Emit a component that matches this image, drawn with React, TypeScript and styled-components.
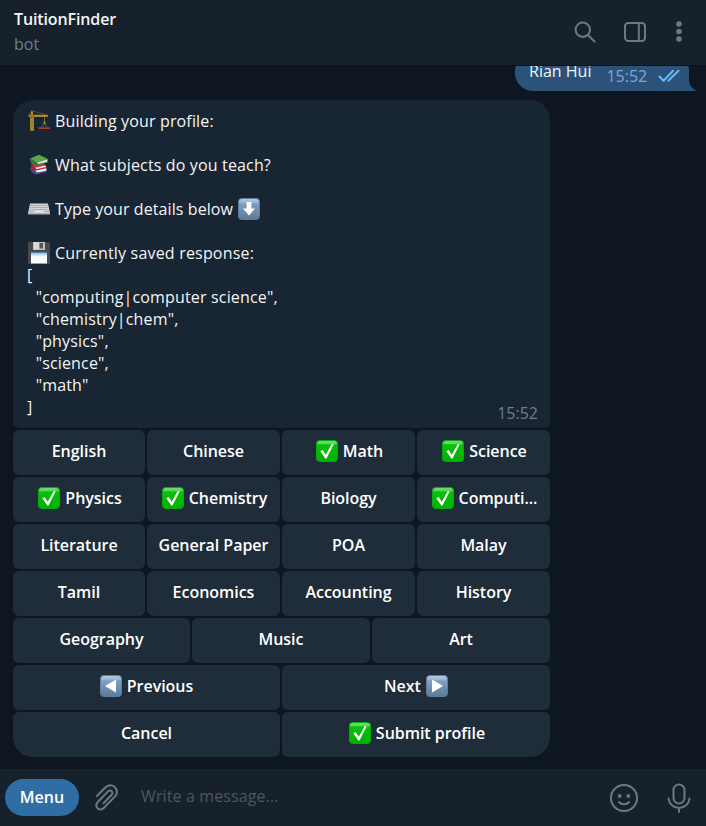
import React from "react";
import styled, { createGlobalStyle } from "styled-components";

const GlobalStyle = createGlobalStyle`
  * { box-sizing: border-box; }
  body { margin: 0; background: #0e1621; }
`;

const Window = styled.div`
  display: flex;
  flex-direction: column;
  width: 706px;
  height: 826px;
  overflow: hidden;
  background: #0e1621;
  color: #f5f5f5;
  font-family: "Open Sans", "Noto Sans", sans-serif;
  font-size: 16px;
  line-height: 22px;
`;

const Header = styled.header`
  display: flex;
  justify-content: space-between;
  flex: none;
  height: 66px;
  padding: 8px 17px 0 14px;
  background: #17212b;
  border-bottom: 1px solid #0b131c;
`;

const Title = styled.h1`
  margin: 0;
  font-size: 16px;
  line-height: 22px;
  font-weight: 600;
  letter-spacing: -0.12px;
`;

const Status = styled.div`
  margin-top: 3px;
  color: #6d7f8f;
`;

const HeaderActions = styled.div`
  display: flex;
  align-items: center;
  height: 48px;
  gap: 22px;
`;

const Icon = styled.svg`
  display: block;
  flex: none;
  fill: none;
  stroke: #6c7883;
  stroke-width: 2;
  stroke-linecap: round;
  stroke-linejoin: round;
`;

const SearchIcon = styled(Icon)`
  margin-right: 4px;
`;

const Chat = styled.main`
  display: flex;
  flex-direction: column;
  justify-content: flex-end;
  flex: 1;
  min-height: 0;
  overflow: hidden;
  padding: 0 10px 11px 13px;
`;

const OutgoingRow = styled.div`
  display: flex;
  flex: none;
  justify-content: flex-end;
  align-items: flex-end;
  margin-bottom: 9px;
`;

const OutgoingBubble = styled.div`
  display: flex;
  width: 174px;
  height: 38px;
  padding: 7px 9px 0 14px;
  border-radius: 18px 18px 0 18px;
  background: #2b5278;
`;

const OutgoingTime = styled.span`
  margin: 5px 0 0 15px;
  color: #7da8d3;
  flex: 1;
`;

const Ticks = styled(Icon)`
  margin-top: 9px;
  stroke: #65b9f4;
`;

const Tail = styled.svg`
  display: block;
  fill: #2b5278;
`;

const Conversation = styled.section`
  display: flex;
  flex-direction: column;
  flex: none;
  gap: 2px;
  width: 537px;
`;

const Message = styled.article`
  display: flex;
  justify-content: space-between;
  align-items: flex-end;
  height: 328px;
  padding: 10px 12px 10px 14px;
  border-radius: 20px 20px 6px 6px;
  background: #182533;
`;

const MessageText = styled.div`
  height: 308px;
  white-space: pre;
  letter-spacing: 0.16px;
`;

const Line = styled.div<{ $tracking?: number }>`
  display: flex;
  align-items: center;
  height: 22px;
  gap: 5px;
  padding-left: 1px;
  letter-spacing: ${(p) => p.$tracking ?? 0.15}px;
`;

const Time = styled.time`
  margin-bottom: -6px;
  color: #6d7f8f;
`;

const firstColumn: Record<number, number> = { 2: 267, 3: 177, 4: 132 };

const KeyRow = styled.div<{ $columns: number }>`
  display: grid;
  grid-template-columns: ${(p) => firstColumn[p.$columns]}px repeat(${(p) => p.$columns - 1}, minmax(0, 1fr));
  gap: 2px;
`;

const Key = styled.button<{ $corner?: "left" | "right"; $checked?: boolean }>`
  display: flex;
  align-items: center;
  justify-content: center;
  gap: 5px;
  height: 45px;
  padding: 0 0 3px ${(p) => (p.$checked ? 2 : 0)}px;
  border: 0;
  border-radius: ${(p) =>
    p.$corner === "left" ? "6px 6px 6px 20px" : p.$corner === "right" ? "6px 6px 20px 6px" : "6px"};
  background: #1f2c39;
  color: #fff;
  font: 600 16px/22px "Open Sans", "Noto Sans", sans-serif;
  letter-spacing: -0.03px;
  white-space: nowrap;
`;

const Composer = styled.footer`
  display: flex;
  align-items: center;
  flex: none;
  height: 58px;
  padding: 0 15px 0 5px;
  background: #17212b;
  border-top: 1px solid #0b131c;
`;

const MenuButton = styled.button`
  width: 74px;
  height: 37px;
  padding: 0 0 1px;
  border: 0;
  border-radius: 19px;
  background: #2f6ea5;
  color: #fff;
  font: 600 16px/22px "Open Sans", "Noto Sans", sans-serif;
`;

const Placeholder = styled.div`
  flex: 1;
  margin: -3px 0 0 21px;
  color: #4b5763;
  letter-spacing: 0.12px;
`;

const AttachIcon = styled(Icon)`
  margin-left: 16px;
`;

const MicIcon = styled(Icon)`
  margin-left: 29px;
`;

const Emoji = styled.svg`
  display: block;
  flex: none;
  width: 22px;
  height: 22px;
`;

const Gradients = () => (
  <defs>
    <linearGradient id="green" x1="0" y1="0" x2="0" y2="1">
      <stop offset="0" stopColor="#71df73" />
      <stop offset=".16" stopColor="#55d658" />
      <stop offset=".2" stopColor="#06c20b" />
      <stop offset="1" stopColor="#00b100" />
    </linearGradient>
    <linearGradient id="blue" x1="0" y1="0" x2="0" y2="1">
      <stop offset="0" stopColor="#b7cce3" />
      <stop offset=".18" stopColor="#9ab8d7" />
      <stop offset=".25" stopColor="#7fa0c2" />
      <stop offset="1" stopColor="#5d7a98" />
    </linearGradient>
    <linearGradient id="label" x1="0" y1="0" x2="0" y2="1">
      <stop offset="0" stopColor="#78b9e6" />
      <stop offset=".3" stopColor="#e2f0fa" />
      <stop offset=".4" stopColor="#fafafa" />
    </linearGradient>
  </defs>
);

const Check = () => (
  <Emoji viewBox="0 0 22 22">
    <Gradients />
    <rect x=".5" y=".5" width="21" height="21" rx="3.3" fill="url(#green)" stroke="#08a910" />
    <path d="M4.3 11.3 6.6 10l3.2 4.7L15.7 4l2 .3-7.2 14.1H9.3z" fill="#fff" />
  </Emoji>
);

const Arrow = ({ d }: { d: string }) => (
  <Emoji viewBox="0 0 22 22">
    <Gradients />
    <rect x=".5" y=".5" width="21" height="21" rx="3.3" fill="url(#blue)" stroke="#5d7d9e" />
    <path d={d} fill="#fff" />
  </Emoji>
);

const Crane = () => (
  <Emoji viewBox="0 0 22 22">
    <path d="M4 0v5M4 .8 1 5M4 .8l15 4.400" fill="none" stroke="#695b3c" strokeWidth=".8" />
    <path d="M.5 4.800h19.500v2.200H.5z" fill="#a08030" />
    <path d="M2 6h4v15H2z" fill="#8a6f2c" />
    <path d="m2 8 4 3-4 3 4 3-4 3M6 8l-4 3 4 3-4 3 4 3M7 5l2 1.500 2-1.500 2 1.500 2-1.500 2 1.500 2-1.500" fill="none" stroke="#bd9637" strokeWidth=".8" />
    <path d="M2.800 1.500h2.200V5H2.800z" fill="#b18b2f" />
    <path d="M16.500 7v7m-3 3 3-3 3 3" fill="none" stroke="#85744a" strokeWidth=".8" />
    <path d="M15.600 11.500h1.800V14h-1.800z" fill="#b3923b" />
    <path d="M10.500 17.300H22V19H10.500z" fill="#b23a22" />
  </Emoji>
);

const Books = () => (
  <Emoji viewBox="0 0 22 22">
    <path d="m3 13 12-2 4 6-11 3.5z" fill="#4055a5" />
    <path d="m5 15 13-2.2.5 4L8 20z" fill="#e8e9ee" />
    <path d="M3 12.5c-2 3 1 6.8 4.7 7.8L18 18.2l.3-1.1L9 18.5 5 14z" fill="#504489" />
    <path d="m3 9 12-1 3.5 5-11 3z" fill="#d92d3a" />
    <path d="m7 13.8 10.5-2.3.4 1.6L8 15.500z" fill="#f0eef0" />
    <path d="M3 9c-.5 4 1.8 7 5 7.6l10-2.3v-1L8.4 15.2z" fill="#b61d2c" />
    <path d="M2 4.5 11 .7l8.500 4L9 9z" fill="#58a849" />
    <path d="M9 8.800 19.500 5v3L10 11z" fill="#dedfd2" />
    <path d="M1.800 4.600C1.600 8 5.500 12 9.400 11.800L19.500 8.800v-.8L9.700 10.300 9 8.700z" fill="#287e37" />
  </Emoji>
);

const KeyboardEmoji = () => (
  <Emoji viewBox="0 0 22 22">
    <path d="M2 5.5h18L22 15H0z" fill="#d3d4d8" />
    <path d="M0 15h22v1.5H0z" fill="#aaaeb5" />
    <path d="M2.3 7.5h17.5M1.8 9.5h18.5M1.4 11.6h19.2M1.2 13.5h19.8" stroke="#858a92" strokeWidth=".7" strokeDasharray="1.5 .6" />
    <path d="M6.5 13.5h9" stroke="#eee" />
  </Emoji>
);

const Floppy = () => (
  <Emoji viewBox="0 0 22 22">
    <Gradients />
    <path d="M0 0h21l1 1v21H0z" fill="#47494c" />
    <path d="M5 0h12v8H5z" fill="#bfc2c5" />
    <path d="M6 0h5v7H6z" fill="#d9dadd" />
    <path d="M11.5 1h3.5v5.5h-3.5z" fill="#54585b" />
    <path d="M3 10.5h16v11H3z" fill="url(#label)" />
  </Emoji>
);

const rows: { label: string; checked?: boolean }[][] = [
  [{ label: "English" }, { label: "Chinese" }, { label: "Math", checked: true }, { label: "Science", checked: true }],
  [{ label: "Physics", checked: true }, { label: "Chemistry", checked: true }, { label: "Biology" }, { label: "Computi...", checked: true }],
  [{ label: "Literature" }, { label: "General Paper" }, { label: "POA" }, { label: "Malay" }],
  [{ label: "Tamil" }, { label: "Economics" }, { label: "Accounting" }, { label: "History" }],
  [{ label: "Geography" }, { label: "Music" }, { label: "Art" }],
];

export default function App() {
  return (
    <Window>
      <GlobalStyle />
      <Header>
        <div>
          <Title>TuitionFinder</Title>
          <Status>bot</Status>
        </div>
        <HeaderActions>
          <SearchIcon width="24" height="24" viewBox="0 0 24 24">
            <circle cx="9.8" cy="9.700" r="7.2" />
            <path d="m15 15 6.5 6.5" />
          </SearchIcon>
          <Icon width="24" height="24" viewBox="0 0 24 24">
            <rect x="2" y="3" width="20" height="18" rx="3.2" />
            <path d="M15.8 3v18" />
          </Icon>
          <Icon width="20" height="24" viewBox="0 0 20 24">
            <g fill="#6c7883" stroke="none">
              <circle cx="10" cy="4" r="2.8" />
              <circle cx="10" cy="11.5" r="2.8" />
              <circle cx="10" cy="19" r="2.8" />
            </g>
          </Icon>
        </HeaderActions>
      </Header>

      <Chat>
        <OutgoingRow>
          <OutgoingBubble>
            <span>Rian Hui</span>
            <OutgoingTime>15:52</OutgoingTime>
            <Ticks width="22" height="14" viewBox="0 0 22 14">
              <path d="m1.5 7.5 4 4.2 9.500-10M10.300 11.700l10.200-10" />
            </Ticks>
          </OutgoingBubble>
          <Tail width="7" height="12" viewBox="0 0 7 12">
            <path d="M0 0c0 5 2 9 7 11.5L6 12H0z" />
          </Tail>
        </OutgoingRow>

        <Conversation>
          <Message>
            <MessageText>
              <Line><Crane />Building your profile:</Line>
              <Line />
              <Line><Books />What subjects do you teach?</Line>
              <Line />
              <Line $tracking={0.09}><KeyboardEmoji />Type your details below<Arrow d="M8.6 4h4.8v6.5H17L11 17.5 5 10.5h3.6z" /></Line>
              <Line />
              <Line $tracking={0.19}><Floppy />Currently saved response:</Line>
              {'[\n  "computing|computer science",\n  "chemistry|chem",\n  "physics",\n  "science",\n  "math"\n]'}
            </MessageText>
            <Time>15:52</Time>
          </Message>

          {rows.map((row) => (
            <KeyRow key={row[0].label} $columns={row.length}>
              {row.map(({ label, checked }) => (
                <Key key={label} $checked={checked}>{checked && <Check />}{label}</Key>
              ))}
            </KeyRow>
          ))}
          <KeyRow $columns={2}>
            <Key><Arrow d="M16 4.5v13L5 11z" />Previous</Key>
            <Key>Next<Arrow d="M6 4.5v13L17 11z" /></Key>
          </KeyRow>
          <KeyRow $columns={2}>
            <Key $corner="left">Cancel</Key>
            <Key $corner="right" $checked><Check />Submit profile</Key>
          </KeyRow>
        </Conversation>
      </Chat>

      <Composer>
        <MenuButton>Menu</MenuButton>
        <AttachIcon width="25" height="28" viewBox="0 0 25 28">
          <path d="m2 12 7-7.3c4-4.1 7.5-4.2 10.4-2 3.3 2.7 3.4 7 .2 10.2L9 23.7c-2.1 2.2-4.7 2.2-6.4.5-1.8-1.9-1.6-4.4.4-6.5L13 7.4c1.2-1.2 2.7-1.2 3.7-.2 1.1 1.1 1 2.6-.2 3.8l-8 8.2" />
        </AttachIcon>
        <Placeholder>Write a message...</Placeholder>
        <Icon width="28" height="28" viewBox="0 0 28 28">
          <circle cx="14" cy="14" r="13" />
          <path d="M9 18c2.5 3 7.5 3 10 0" />
          <g fill="#6c7883" stroke="none">
            <circle cx="9.7" cy="12" r="1.9" />
            <circle cx="18.3" cy="12" r="1.9" />
          </g>
        </Icon>
        <MicIcon width="24" height="30" viewBox="0 0 24 30">
          <rect x="6.5" y="1.5" width="11" height="19" rx="5.5" />
          <path d="M1.5 15.5C2 21 6.5 25 12 25s10-4 10.5-9.5M12 25v4" />
        </MicIcon>
      </Composer>
    </Window>
  );
}
